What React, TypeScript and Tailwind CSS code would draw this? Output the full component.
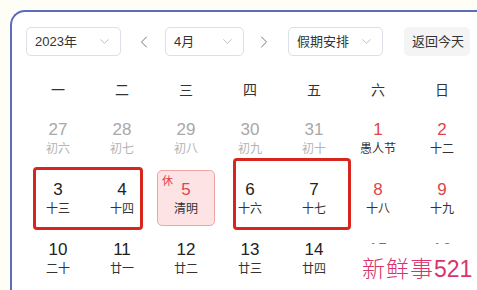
import { ChevronDown, ChevronLeft, ChevronRight } from "lucide-react";

type Day = {
  n: number;
  lunar: string;
  muted?: boolean;
  red?: boolean;
  holiday?: boolean;
};

const weekdays = ["一", "二", "三", "四", "五", "六", "日"];

const rows: Day[][] = [
  [
    { n: 27, lunar: "初六", muted: true },
    { n: 28, lunar: "初七", muted: true },
    { n: 29, lunar: "初八", muted: true },
    { n: 30, lunar: "初九", muted: true },
    { n: 31, lunar: "初十", muted: true },
    { n: 1, lunar: "愚人节", red: true },
    { n: 2, lunar: "十二", red: true },
  ],
  [
    { n: 3, lunar: "十三" },
    { n: 4, lunar: "十四" },
    { n: 5, lunar: "清明", holiday: true },
    { n: 6, lunar: "十六" },
    { n: 7, lunar: "十七" },
    { n: 8, lunar: "十八", red: true },
    { n: 9, lunar: "十九", red: true },
  ],
  [
    { n: 10, lunar: "二十" },
    { n: 11, lunar: "廿一" },
    { n: 12, lunar: "廿二" },
    { n: 13, lunar: "廿三" },
    { n: 14, lunar: "廿四" },
    { n: 15, lunar: "廿五", red: true },
    { n: 16, lunar: "廿六", red: true },
  ],
];

const font = { fontFamily: '"Liberation Sans", "Noto Sans CJK SC", sans-serif' };

function Select({ label, width }: { label: string; width: string }) {
  return (
    <div
      className={`${width} h-[29px] flex items-center justify-between pl-[8px] pr-[8px] border border-[#dcdfe6] rounded-[5px] bg-white text-[13px] text-[#333]`}
    >
      <span>{label}</span>
      <ChevronDown size={15} strokeWidth={1.2} className="text-[#a8abb2]" />
    </div>
  );
}

function DayCell({ d }: { d: Day }) {
  const numColor = d.muted ? "text-[#a8a8a8]" : d.red || d.holiday ? "text-[#e0434b]" : "text-[#222]";
  const lunarColor = d.muted ? "text-[#b4b4b4]" : "text-[#333]";

  if (d.holiday) {
    return (
      <div className="h-[60px] px-[3px] pb-[4px]">
        <div className="relative h-full rounded-[5px] border border-[#eda5a8] bg-[#fde3e4] flex flex-col items-center pt-[9px]">
          <span className="absolute left-[4px] top-[3px] text-[11px] leading-[14px] text-[#e0434b]">休</span>
          <span className={`text-[17px] leading-[20px] ${numColor}`}>{d.n}</span>
          <span className={`mt-[1px] text-[12px] leading-[16px] ${lunarColor}`}>{d.lunar}</span>
        </div>
      </div>
    );
  }

  return (
    <div className="h-[60px] flex flex-col items-center pt-[10px]">
      <span className={`text-[17px] leading-[20px] ${numColor}`}>{d.n}</span>
      <span className={`mt-[1px] text-[12px] leading-[16px] ${lunarColor}`}>{d.lunar}</span>
    </div>
  );
}

export default function App() {
  return (
    <div className="relative w-[477px] h-[290px] overflow-hidden bg-[#fefef7]" style={font}>
      <div className="ml-[10px] mt-[10px] w-[520px] h-[320px] border-l-2 border-t-2 border-[#5b6bbd] rounded-tl-[15px] bg-white pl-[14px] pt-[15px]">
        <div className="flex items-center">
          <Select label="2023年" width="w-[95px]" />
          <ChevronLeft size={20} strokeWidth={1.2} className="ml-[13px] mr-[11px] text-[#777]" />
          <Select label="4月" width="w-[79px]" />
          <ChevronRight size={20} strokeWidth={1.2} className="ml-[10px] mr-[14px] text-[#777]" />
          <Select label="假期安排" width="w-[95px]" />
          <div className="ml-[21px] w-[66px] h-[29px] flex items-center pl-[8px] rounded-[5px] bg-[#f4f4f5] text-[13px] text-[#333]">
            返回今天
          </div>
        </div>

        <div className="mt-[14px] grid grid-cols-[repeat(7,64px)] h-[40px] items-center">
          {weekdays.map((w) => (
            <div key={w} className="text-center text-[14px] text-[#333]">
              {w}
            </div>
          ))}
        </div>

        {rows.map((row, i) => (
          <div key={i} className="grid grid-cols-[repeat(7,64px)]">
            {row.map((d) => (
              <DayCell key={`${i}-${d.n}`} d={d} />
            ))}
          </div>
        ))}
      </div>

      {/* annotation boxes */}
      <div className="absolute left-[33px] top-[167px] w-[110px] h-[63px] border-[3px] border-[#d8261f] rounded-[4px]" />
      <div className="absolute left-[233px] top-[158px] w-[118px] h-[72px] border-[3px] border-[#d8261f] rounded-[4px]" />

      {/* watermark */}
      <div className="absolute left-[351px] top-[244px] w-[130px] h-[50px] bg-white flex items-center pl-[11px]">
        <span className="text-[23px] leading-[28px] text-[#d9336b] font-light tracking-[1px]">
          新鲜事<span style={{ fontFamily: '"Liberation Sans", sans-serif' }} className="tracking-normal">521</span>
        </span>
      </div>
    </div>
  );
}
